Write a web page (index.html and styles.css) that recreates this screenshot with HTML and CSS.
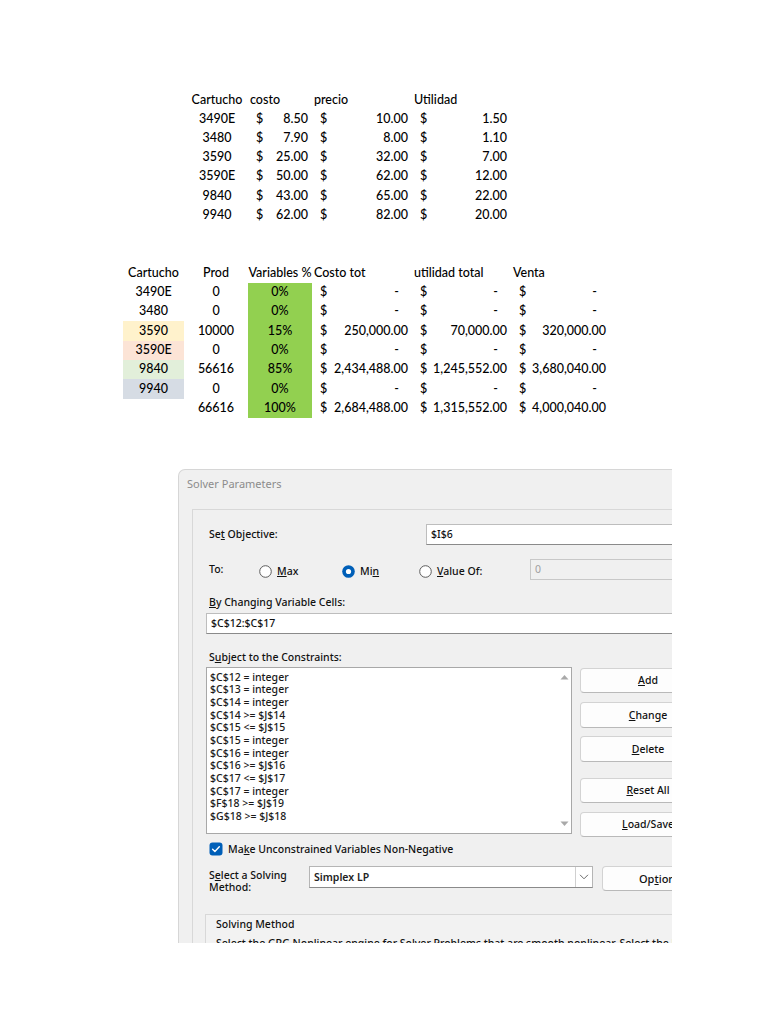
FILE: index.html
```html
<!DOCTYPE html>
<html lang="es">
<head>
<meta charset="utf-8">
<title>Solver</title>
<link rel="stylesheet" href="styles.css">
</head>
<body>
<div class="sheet sheet1">
  <div class="c hc h1">Cartucho</div><div class="c hl h1">costo</div><div class="c hl h1">precio</div><div class="c hl h1">Utilidad</div>

  <div class="c cen">3490E</div><div class="c acc"><span>$</span><span>8.50</span></div><div class="c acc"><span>$</span><span>10.00</span></div><div class="c acc"><span>$</span><span>1.50</span></div>
  <div class="c cen">3480</div><div class="c acc"><span>$</span><span>7.90</span></div><div class="c acc"><span>$</span><span>8.00</span></div><div class="c acc"><span>$</span><span>1.10</span></div>
  <div class="c cen">3590</div><div class="c acc"><span>$</span><span>25.00</span></div><div class="c acc"><span>$</span><span>32.00</span></div><div class="c acc"><span>$</span><span>7.00</span></div>
  <div class="c cen">3590E</div><div class="c acc"><span>$</span><span>50.00</span></div><div class="c acc"><span>$</span><span>62.00</span></div><div class="c acc"><span>$</span><span>12.00</span></div>
  <div class="c cen">9840</div><div class="c acc"><span>$</span><span>43.00</span></div><div class="c acc"><span>$</span><span>65.00</span></div><div class="c acc"><span>$</span><span>22.00</span></div>
  <div class="c cen">9940</div><div class="c acc"><span>$</span><span>62.00</span></div><div class="c acc"><span>$</span><span>82.00</span></div><div class="c acc"><span>$</span><span>20.00</span></div>
</div>

<div class="sheet sheet2">
  <div class="c hc">Cartucho</div><div class="c hc">Prod</div><div class="c hc wide">Variables %</div><div class="c hl">Costo tot</div><div class="c hl">utilidad total</div><div class="c hl">Venta</div>

  <div class="c cen">3490E</div><div class="c cen">0</div><div class="c cen green">0%</div><div class="c acc"><span>$</span><span class="dash">-</span></div><div class="c acc"><span>$</span><span class="dash">-</span></div><div class="c acc"><span>$</span><span class="dash">-</span></div>
  <div class="c cen">3480</div><div class="c cen">0</div><div class="c cen green">0%</div><div class="c acc"><span>$</span><span class="dash">-</span></div><div class="c acc"><span>$</span><span class="dash">-</span></div><div class="c acc"><span>$</span><span class="dash">-</span></div>
  <div class="c cen gold">3590</div><div class="c cen">10000</div><div class="c cen green">15%</div><div class="c acc"><span>$</span><span>250,000.00</span></div><div class="c acc"><span>$</span><span>70,000.00</span></div><div class="c acc"><span>$</span><span>320,000.00</span></div>
  <div class="c cen orange">3590E</div><div class="c cen">0</div><div class="c cen green">0%</div><div class="c acc"><span>$</span><span class="dash">-</span></div><div class="c acc"><span>$</span><span class="dash">-</span></div><div class="c acc"><span>$</span><span class="dash">-</span></div>
  <div class="c cen lgreen">9840</div><div class="c cen">56616</div><div class="c cen green">85%</div><div class="c acc"><span>$</span><span>2,434,488.00</span></div><div class="c acc"><span>$</span><span>1,245,552.00</span></div><div class="c acc"><span>$</span><span>3,680,040.00</span></div>
  <div class="c cen blue">9940</div><div class="c cen">0</div><div class="c cen green">0%</div><div class="c acc"><span>$</span><span class="dash">-</span></div><div class="c acc"><span>$</span><span class="dash">-</span></div><div class="c acc"><span>$</span><span class="dash">-</span></div>
  <div class="c"></div><div class="c cen">66616</div><div class="c cen green">100%</div><div class="c acc"><span>$</span><span>2,684,488.00</span></div><div class="c acc"><span>$</span><span>1,315,552.00</span></div><div class="c acc"><span>$</span><span>4,000,040.00</span></div>
</div>

<div class="dialog">
  <div class="title">Solver Parameters</div>
  <div class="group">
    <div class="row obj">
      <div class="lbl lbl-obj">Se<u>t</u> Objective:</div>
      <div class="input obj-input">$I$6</div>
    </div>
    <div class="row to">
      <div class="lbl lbl-to">To:</div>
      <div class="radio r-max">
        <svg width="13" height="13" viewBox="0 0 13 13"><circle cx="6.5" cy="6.5" r="5.8" fill="#fff" stroke="#5c5c5c" stroke-width="1"/></svg>
        <span><u>M</u>ax</span>
      </div>
      <div class="radio r-min">
        <svg width="13" height="13" viewBox="0 0 13 13"><circle cx="6.5" cy="6.5" r="6.3" fill="#005fb8"/><circle cx="6.5" cy="6.5" r="2.6" fill="#fff"/></svg>
        <span>Mi<u>n</u></span>
      </div>
      <div class="radio r-val">
        <svg width="13" height="13" viewBox="0 0 13 13"><circle cx="6.5" cy="6.5" r="5.8" fill="#fff" stroke="#5c5c5c" stroke-width="1"/></svg>
        <span><u>V</u>alue Of:</span>
      </div>
      <div class="input disabled val-input">0</div>
    </div>
    <div class="lbl lbl-block lbl-by"><u>B</u>y Changing Variable Cells:</div>
    <div class="input var-input">$C$12:$C$17</div>
    <div class="lbl lbl-block lbl-subj">S<u>u</u>bject to the Constraints:</div>
    <div class="row cons">
      <div class="list">
        <div class="items">
          <div>$C$12 = integer</div>
          <div>$C$13 = integer</div>
          <div>$C$14 = integer</div>
          <div>$C$14 &gt;= $J$14</div>
          <div>$C$15 &lt;= $J$15</div>
          <div>$C$15 = integer</div>
          <div>$C$16 = integer</div>
          <div>$C$16 &gt;= $J$16</div>
          <div>$C$17 &lt;= $J$17</div>
          <div>$C$17 = integer</div>
          <div>$F$18 &gt;= $J$19</div>
          <div>$G$18 &gt;= $J$18</div>
        </div>
        <div class="scroll">
          <svg width="9" height="6" viewBox="0 0 9 6"><polygon points="0.5,5.5 4.5,1 8.5,5.5" fill="#a9a9a9"/></svg>
          <svg width="9" height="6" viewBox="0 0 9 6"><polygon points="0.5,0.5 4.5,5 8.5,0.5" fill="#a9a9a9"/></svg>
        </div>
      </div>
      <div class="buttons">
        <div class="btn b-add"><u>A</u>dd</div>
        <div class="btn b-change"><u>C</u>hange</div>
        <div class="btn b-delete"><u>D</u>elete</div>
        <div class="btn b-reset"><u>R</u>eset All</div>
        <div class="btn b-load"><u>L</u>oad/Save</div>
      </div>
    </div>
    <div class="row check">
      <svg width="14" height="14" viewBox="0 0 14 14"><rect x="0.5" y="0.5" width="13" height="13" rx="3" fill="#005fb8"/><path d="M3.6 7.2 L5.9 9.4 L10.3 4.7" fill="none" stroke="#fff" stroke-width="1.4" stroke-linecap="round" stroke-linejoin="round"/></svg>
      <span>Ma<u>k</u>e Unconstrained Variables Non-Negative</span>
    </div>
    <div class="row method">
      <div class="lbl lbl-method"><div>S<u>e</u>lect a Solving</div><div>Method:</div></div>
      <div class="select">
        <span class="sel-text">Simplex LP</span>
        <span class="sel-arrow"><svg width="10" height="6" viewBox="0 0 10 6"><path d="M1 0.8 L5 4.8 L9 0.8" fill="none" stroke="#6b6b6b" stroke-width="1"/></svg></span>
      </div>
      <div class="btn b-opt">Op<u>t</u>ions</div>
    </div>
    <div class="sm-box">
      <div class="sm-title">Solving Method</div>
      <div class="sm-text">Select the GRG Nonlinear engine for Solver Problems that are smooth nonlinear. Select the LP Simplex engine for linear Solver Problems.</div>
    </div>
  </div>
</div>
</body>
</html>
```

FILE: styles.css
```css
html, body {
  margin: 0;
  padding: 0;
  background: #fff;
}
body {
  width: 768px;
  height: 1024px;
  overflow: hidden;
  font-family: Lato, "Liberation Sans", sans-serif;
  color: #000;
}

/* ---------- spreadsheet areas ---------- */
.sheet {
  display: grid;
  font-family: Lato, "Liberation Sans", sans-serif;
  font-size: 12.5px;
  font-weight: 500;
  color: #000;
}
.sheet1 {
  margin: 90px 0 0 186px;
  width: 325px;
  grid-template-columns: 62px 64px 100px 99px;
  grid-auto-rows: 19.25px;
}
.sheet2 {
  margin: 38px 0 0 123px;
  width: 487px;
  grid-template-columns: 61px 64px 64px 100px 99px 99px;
  grid-template-rows: 20px;
  grid-auto-rows: 19.3px;
}
.c {
  display: flex;
  align-items: center;
  white-space: nowrap;
  line-height: 1;
}
.h1 { padding-top: 2px; }
.hc { justify-content: center; }
.hl { padding-left: 2px; }
.wide { overflow: visible; }
.cen { justify-content: center; }
.acc {
  justify-content: space-between;
  padding: 0 4px 0 8px;
}
.acc .dash { padding-right: 9px; }
.green { background: #92d050; }
.gold { background: #fff2cc; }
.orange { background: #fce4d6; }
.lgreen { background: #e2efda; }
.blue { background: #d6dce4; }

/* ---------- dialog ---------- */
.dialog {
  margin: 51px 0 0 178px;
  width: 494px;
  height: 474px;
  overflow: hidden;
  background: #f0f0f0;
  border-top: 1px solid #d6d6d6;
  border-left: 1px solid #d6d6d6;
  border-top-left-radius: 7px;
  font-family: "Noto Sans", "Open Sans", sans-serif;
  font-size: 10.5px;
  font-weight: 500;
  color: #111;
  box-sizing: border-box;
}
.title {
  height: 39px;
  padding: 6px 0 0 8px;
  box-sizing: border-box;
  color: #8c8c8c;
  font-size: 11px;
  font-weight: 400;
}
.group {
  margin-left: 13px;
  width: 620px;
  height: 460px;
  border: 1px solid #d8d8d8;
  box-sizing: border-box;
  padding: 14px 0 0 13px;
  background: #f0f0f0;
}
.row {
  display: flex;
  align-items: center;
}
.lbl { padding-left: 3px; }
.input {
  height: 21px;
  box-sizing: border-box;
  background: #fff;
  border: 1px solid #bdbdbd;
  border-bottom-color: #8a8a8a;
  display: flex;
  align-items: center;
  padding-left: 4px;
  color: #111;
}
.obj { height: 21px; }
.lbl-obj { width: 217px; }
.obj-input { width: 300px; }

.to { margin-top: 14px; height: 21px; }
.lbl-to { width: 50px; }
.radio {
  display: flex;
  align-items: center;
  gap: 5px;
  padding-top: 4px;
}
.radio svg { flex: none; }
.r-max { width: 83px; }
.r-min { width: 77px; }
.r-val { width: 111px; }
.disabled {
  background: #f0f0f0;
  border-color: #c8c8c8;
  color: #a0a0a0;
  font-weight: 400;
  width: 200px;
}

.lbl-block { line-height: 14px; }
.lbl-by { margin-top: 15px; }
.var-input { margin-top: 4px; width: 520px; }
.lbl-subj { margin-top: 16px; }

.cons {
  margin-top: 3px;
  align-items: flex-start;
}
.list {
  width: 366px;
  height: 167px;
  box-sizing: border-box;
  background: #fff;
  border: 1px solid #a8a8a8;
  display: flex;
  justify-content: space-between;
}
.items {
  padding: 3px 0 0 3px;
  line-height: 12.65px;
  color: #1a1a1a;
}
.scroll {
  width: 14px;
  display: flex;
  flex-direction: column;
  justify-content: space-between;
  align-items: center;
  padding: 6px 0 6px;
}
.buttons {
  margin-left: 8px;
  padding-top: 1px;
  display: flex;
  flex-direction: column;
}
.btn {
  width: 136px;
  height: 25px;
  box-sizing: border-box;
  background: #fdfdfd;
  border: 1px solid #d3d3d3;
  border-bottom-color: #b9b9b9;
  border-radius: 4px;
  display: flex;
  align-items: center;
  justify-content: center;
  color: #111;
}
.b-change { margin-top: 9px; height: 26px; }
.b-delete { margin-top: 8px; height: 26px; }
.b-reset { margin-top: 16px; }
.b-load { margin-top: 9px; }

.check {
  margin-top: 5px;
  padding-left: 3px;
  gap: 5px;
  height: 14px;
}
.check svg { flex: none; }

.method {
  margin-top: 10px;
  align-items: flex-start;
}
.lbl-method {
  width: 100px;
  line-height: 12.5px;
  padding-top: 3px;
}
.select {
  width: 284px;
  height: 22px;
  box-sizing: border-box;
  background: #fff;
  border: 1px solid #b5b5b5;
  border-bottom-color: #8a8a8a;
  display: flex;
  align-items: center;
  justify-content: space-between;
}
.sel-text { padding-left: 4px; font-weight: 600; color: #222; }
.sel-arrow {
  width: 17px;
  height: 20px;
  box-sizing: border-box;
  border-left: 1px solid #d0d0d0;
  display: flex;
  align-items: center;
  justify-content: center;
}
.b-opt {
  margin-left: 9px;
  width: 100px;
  justify-content: flex-start;
  padding-left: 36px;
  font-size: 11px;
}

.sm-box {
  margin: 20px 0 0 -1px;
  height: 60px;
  border: 1px solid #d8d8d8;
  padding: 2px 0 0 10px;
  box-sizing: border-box;
  background: #f2f2f2;
}
.sm-title { line-height: 14px; }
.sm-text { margin-top: 5px; white-space: nowrap; line-height: 14px; }
```
